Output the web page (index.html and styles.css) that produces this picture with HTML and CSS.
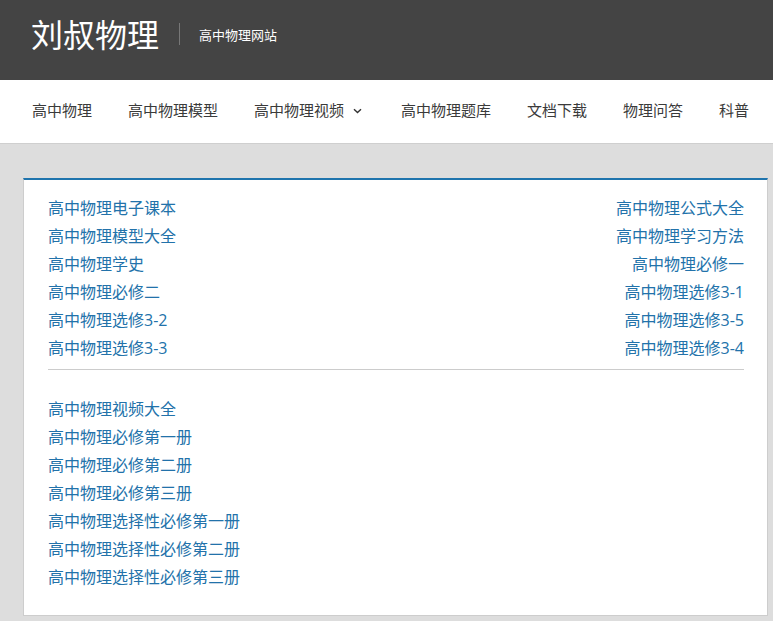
FILE: index.html
```html
<!DOCTYPE html>
<html lang="zh-CN">
<head>
<meta charset="utf-8">
<title>刘叔物理</title>
<link rel="stylesheet" href="styles.css">
</head>
<body>
<header class="site-header">
  <div class="brand">刘叔物理</div>
  <div class="divider-v"></div>
  <div class="tagline">高中物理网站</div>
</header>
<nav class="main-nav">
  <a class="nav-item" href="#">高中物理</a>
  <a class="nav-item" href="#">高中物理模型</a>
  <a class="nav-item has-sub" href="#">高中物理视频<svg class="chev" width="9" height="6" viewBox="0 0 9 6"><path d="M1 1.2 L4.5 4.6 L8 1.2" fill="none" stroke="#333" stroke-width="1.4"/></svg></a>
  <a class="nav-item" href="#">高中物理题库</a>
  <a class="nav-item" href="#">文档下载</a>
  <a class="nav-item" href="#">物理问答</a>
  <a class="nav-item" href="#">科普</a>
</nav>
<main class="content">
  <section class="card">
    <div class="cols">
      <ul class="links">
        <li><a href="#">高中物理电子课本</a></li>
        <li><a href="#">高中物理模型大全</a></li>
        <li><a href="#">高中物理学史</a></li>
        <li><a href="#">高中物理必修二</a></li>
        <li><a href="#">高中物理选修3-2</a></li>
        <li><a href="#">高中物理选修3-3</a></li>
      </ul>
      <ul class="links right">
        <li><a href="#">高中物理公式大全</a></li>
        <li><a href="#">高中物理学习方法</a></li>
        <li><a href="#">高中物理必修一</a></li>
        <li><a href="#">高中物理选修3-1</a></li>
        <li><a href="#">高中物理选修3-5</a></li>
        <li><a href="#">高中物理选修3-4</a></li>
      </ul>
    </div>
    <hr class="sep">
    <ul class="links bottom">
      <li><a href="#">高中物理视频大全</a></li>
      <li><a href="#">高中物理必修第一册</a></li>
      <li><a href="#">高中物理必修第二册</a></li>
      <li><a href="#">高中物理必修第三册</a></li>
      <li><a href="#">高中物理选择性必修第一册</a></li>
      <li><a href="#">高中物理选择性必修第二册</a></li>
      <li><a href="#">高中物理选择性必修第三册</a></li>
    </ul>
  </section>
</main>
</body>
</html>
```
FILE: styles.css
```css
* { box-sizing: border-box; }
html, body { margin: 0; padding: 0; }
body {
  background: #dddddd;
  font-family: "Open Sans", "Noto Sans CJK SC", sans-serif;
  color: #333;
  width: 773px;
  overflow: hidden;
}
a { text-decoration: none; }
.site-header {
  background: #444444;
  height: 80px;
  display: flex;
  align-items: center;
  padding-left: 31px;
}
.brand {
  color: #fff;
  font-size: 32px;
  line-height: 40px;
  font-family: "Noto Sans CJK SC", sans-serif;
  margin-top: -15px;
}
.divider-v {
  width: 1px;
  height: 22px;
  background: #777;
  margin: -12px 19px 0 20px;
}
.tagline {
  color: #fff;
  font-size: 13px;
  margin-top: -12px;
  font-family: "Noto Sans CJK SC", sans-serif;
}
.main-nav {
  background: #fff;
  height: 64px;
  border-bottom: 1px solid #cfcfcf;
  display: flex;
  align-items: center;
  padding-left: 14px;
  white-space: nowrap;
  overflow: hidden;
}
.nav-item {
  color: #3a3a3a;
  font-size: 15px;
  padding: 0 18px;
  line-height: 20px;
  display: flex;
  align-items: center;
  margin-top: -3px;
}
.chev { margin: 2px 3px 0 9px; }
.content {
  padding: 34px 5px 0 23px;
}
.card {
  background: #fff;
  border: 1px solid #cdcdcd;
  border-top: 2px solid #1f74ad;
  padding: 14px 23px 23px 24px;
  height: 438px;
}
.cols {
  display: flex;
  justify-content: space-between;
}
.links {
  list-style: none;
  margin: 0;
  padding: 0;
}
.links li {
  line-height: 28px;
  font-size: 16px;
}
.links a { color: #2272aa; }
.links.right { text-align: right; }
.sep {
  border: 0;
  border-top: 1px solid #cccccc;
  margin: 7px 0 25px 0;
  height: 0;
}
```
